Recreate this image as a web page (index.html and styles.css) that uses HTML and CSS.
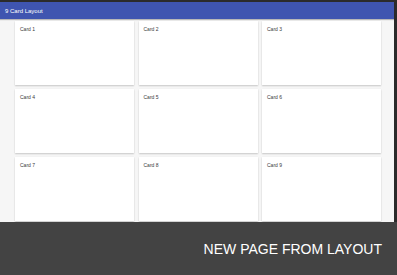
FILE: index.html
```html
<!DOCTYPE html>
<html>
<head>
<meta charset="utf-8">
<link rel="stylesheet" href="styles.css">
</head>
<body>
<div class="frame">
  <header class="appbar"><span class="title">9 Card Layout</span></header>
  <main class="content">
    <div class="grid">
      <div class="card">Card 1</div>
      <div class="card">Card 2</div>
      <div class="card">Card 3</div>
      <div class="card">Card 4</div>
      <div class="card">Card 5</div>
      <div class="card">Card 6</div>
      <div class="card">Card 7</div>
      <div class="card">Card 8</div>
      <div class="card">Card 9</div>
    </div>
  </main>
  <footer class="footer"><span class="footer-text">NEW PAGE FROM LAYOUT</span></footer>
</div>
</body>
</html>
```
FILE: styles.css
```css
html, body {
  margin: 0;
  padding: 0;
  background: #2b2b2b;
}
body {
  width: 397px;
  height: 275px;
  overflow: hidden;
  font-family: "Liberation Sans", Arial, sans-serif;
}
.frame {
  display: flex;
  flex-direction: column;
  height: 275px;
  box-sizing: border-box;
  border-top: 2px solid #2b2b2b;
}
.appbar {
  height: 17px;
  margin-right: 3px;
  background: #3f55b0;
  display: flex;
  align-items: center;
  padding-left: 5px;
  box-shadow: 0 1px 1px rgba(0,0,0,0.25);
  position: relative;
  z-index: 1;
}
.title {
  color: #ffffff;
  font-size: 6px;
}
.content {
  flex: 1;
  margin-right: 3px;
  background: #f6f6f6;
  padding: 2px 13px 0 15px;
  overflow: hidden;
}
.grid {
  display: grid;
  grid-template-columns: repeat(3, 1fr);
  grid-auto-rows: 64px;
  gap: 4px 4.5px;
}
.card {
  background: #ffffff;
  box-shadow: 0 1px 1.5px rgba(0,0,0,0.18), 0 0 1px rgba(0,0,0,0.06);
  font-size: 5px;
  color: #3a3a3a;
  padding: 5px 0 0 5px;
}
.footer {
  height: 53px;
  background: #434343;
  display: flex;
  align-items: center;
  justify-content: flex-end;
  padding-right: 15px;
}
.footer-text {
  color: #ffffff;
  font-size: 14px;
  margin-top: 1px;
}
```
